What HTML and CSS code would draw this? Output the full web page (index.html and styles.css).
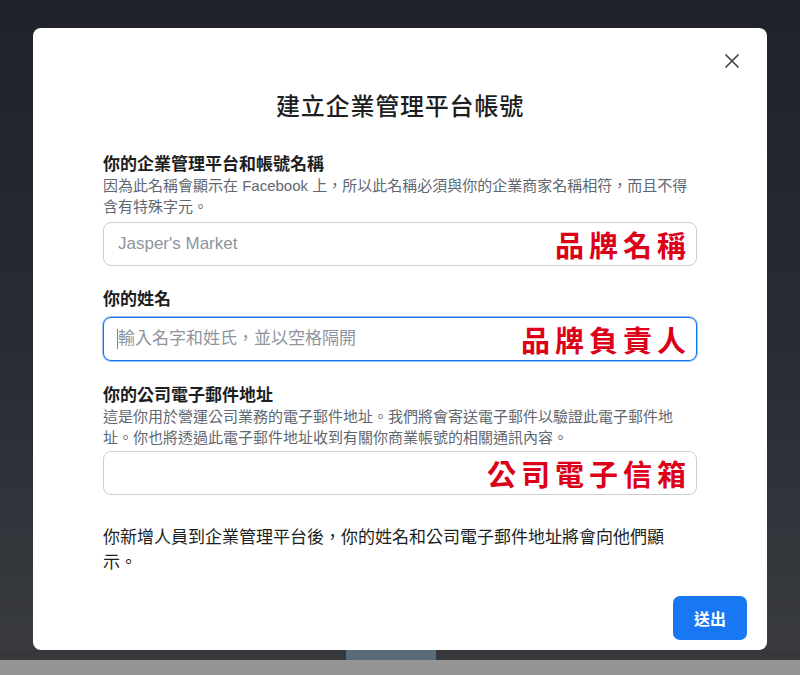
FILE: index.html
```html
<!DOCTYPE html>
<html>
  <head>
    <title>建立企業管理平台帳號</title>
    <link rel="stylesheet" href="styles.css">
  </head>
  <body>
    <div class="backdrop">
      <div class="modal">
        <div class="modal-top">
          <button type="button" class="close" title="關閉">
            <svg width="16" height="16" viewBox="0 0 16 16">
              <path d="M2 2 L14 14 M14 2 L2 14" stroke="#43464b" stroke-width="1.7" stroke-linecap="round" fill="none"/>
            </svg>
          </button>
        </div>
        <h1 class="title">建立企業管理平台帳號</h1>
        <form class="form">
          <div class="field">
            <div class="label">你的企業管理平台和帳號名稱</div>
            <div class="desc">因為此名稱會顯示在 Facebook 上，所以此名稱必須與你的企業商家名稱相符，而且不得<br>含有特殊字元。</div>
            <div class="box">
              <input class="input" id="bizName" placeholder="Jasper's Market">
              <span class="note">品牌名稱</span>
            </div>
          </div>
          <div class="field">
            <div class="label">你的姓名</div>
            <div class="box box-plain">
              <input class="input input-focus" id="fullName" placeholder="輸入名字和姓氏，並以空格隔開">
              <span class="caret"></span>
              <span class="note">品牌負責人</span>
            </div>
          </div>
          <div class="field">
            <div class="label">你的公司電子郵件地址</div>
            <div class="desc desc-tight">這是你用於營運公司業務的電子郵件地址。我們將會寄送電子郵件以驗證此電子郵件地<br>址。你也將透過此電子郵件地址收到有關你商業帳號的相關通訊內容。</div>
            <div class="box">
              <input class="input" id="workEmail">
              <span class="note">公司電子信箱</span>
            </div>
          </div>
          <p class="footnote">你新增人員到企業管理平台後，你的姓名和公司電子郵件地址將會向他們顯示。</p>
        </form>
        <div class="actions">
          <button type="button" class="submit">送出</button>
        </div>
      </div>
    </div>
    <div class="dock"><span class="dock-item"></span></div>
    <div class="taskbar"></div>
  </body>
</html>
```

FILE: styles.css
```css
html, body {
  margin: 0;
  height: 675px;
  overflow: hidden;
}
body {
  display: flex; flex-direction: column;
  font-family: "Liberation Sans", "Noto Sans CJK TC", sans-serif;
  background: #2a2d34;
}
.backdrop {
  height: 650px; box-sizing: border-box;
  padding: 28px 33px 0;
  background: linear-gradient(180deg, #1f222a 0%, #292c34 55%, #393b40 100%);
}
.modal {
  height: 622px; box-sizing: border-box;
  background: #ffffff;
  border-radius: 8px;
  padding-bottom: 10px;
  display: flex; flex-direction: column;
}
.modal-top {
  display: flex; justify-content: flex-end;
  padding: 25px 27px 0;
}
.close {
  width: 16px; height: 15px; padding: 0;
  border: none; background: none; cursor: pointer;
  display: flex; align-items: center; justify-content: center;
}
.close svg { display: block; }
.title {
  margin: 23px 0 31px;
  text-align: center;
  font-size: 24px; line-height: 32px; font-weight: 500;
  letter-spacing: 0.8px;
  color: #1c1e21;
}
.form {
  padding: 0 70px;
  margin: 0;
}
.field {
  margin-bottom: 23px;
}
.field:nth-child(2) {
  margin-bottom: 24px;
}
.label {
  font-size: 17px; line-height: 21px; font-weight: bold;
  color: #1c1e21;
  margin-bottom: 7px;
}
.label + .desc {
  margin-top: -7px;
}
.desc {
  font-size: 15px; line-height: 21px;
  color: #606770;
  margin-bottom: 5px;
}
.desc-tight {
  margin-bottom: 3px;
}
.box {
  position: relative;
  height: 44px;
}
.input {
  width: 100%; height: 44px; box-sizing: border-box;
  border: 1px solid #ccd0d5; border-radius: 8px;
  padding: 0 14px;
  font-family: "Liberation Sans", "Noto Sans CJK TC", sans-serif;
  font-size: 17px;
  color: #1c1e21;
  outline: none;
}
.input::placeholder {
  color: #8d949e;
}
.input-focus {
  border: 1px solid #1877f2;
  box-shadow: 0 0 0 1px rgba(24, 119, 242, 0.45);
}
.caret {
  position: absolute; left: 14px; top: 12px;
  width: 1px; height: 20px;
  background: #7d8289;
}
.note {
  position: absolute; right: 6px; top: 50%;
  transform: translateY(-50%);
  font-family: "Noto Sans CJK TC", sans-serif;
  font-size: 29px; line-height: 34px; font-weight: bold;
  letter-spacing: 5px;
  color: #dc0018;
  pointer-events: none;
}
.footnote {
  margin: 30px 0 0;
  max-width: 570px;
  font-size: 17px; line-height: 25px;
  color: #1c1e21;
}
.actions {
  margin-top: auto;
  display: flex; justify-content: flex-end;
  padding: 0 20px;
}
.submit {
  width: 74px; height: 44px;
  border: none; border-radius: 7px;
  background: #1877f2; color: #ffffff;
  font-family: "Noto Sans CJK TC", sans-serif;
  font-size: 16px; font-weight: bold;
  cursor: pointer;
}
.dock {
  height: 10px;
  background: #36383c;
  display: flex;
}
.dock-item {
  width: 90px; margin-left: 346px;
  background: #586b78;
}
.taskbar {
  height: 15px;
  background: #959595;
}
```
